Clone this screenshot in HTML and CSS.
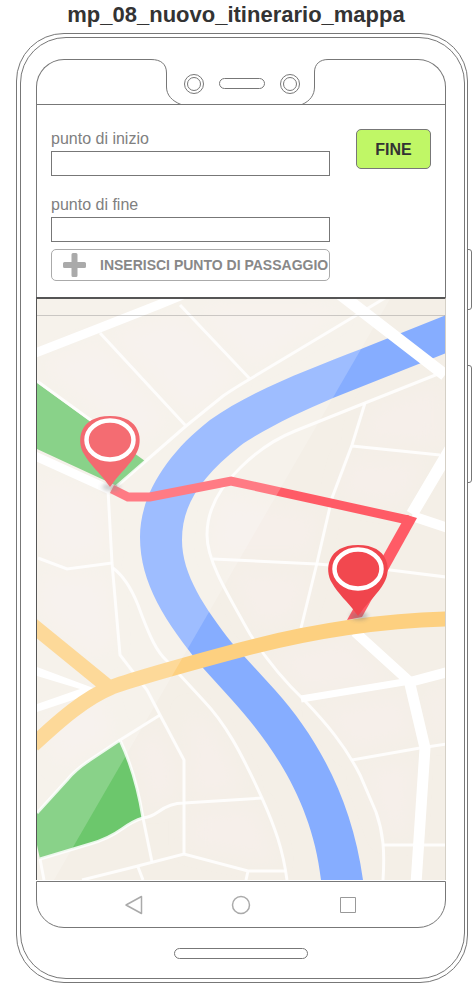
FILE: index.html
```html
<!DOCTYPE html>
<html lang="it">
<head>
<meta charset="utf-8">
<meta name="viewport" content="width=device-width, initial-scale=1">
<title>mp_08_nuovo_itinerario_mappa</title>
<link rel="stylesheet" href="styles.css">
</head>
<body>
<h1 class="title">mp_08_nuovo_itinerario_mappa</h1>
<div class="phone">
  <span class="side-key side-key-power"></span>
  <span class="side-key side-key-volume"></span>
  <div class="bezel">
    <div class="top">
      <div class="ear ear-left"></div>
      <svg class="notch" width="180" height="45" viewBox="151 59 180 45" aria-hidden="true">
        <path d="M151 59.500C161 59.500 166.500 64 166.500 73V87C166.500 95 172 101 181 104.500"/>
        <path d="M331 59.500H328C320 59.500 314.500 64 314.500 72V87C314.500 95 310 101 302 104.500"/>
        <circle cx="194" cy="84" r="9.500"/><circle cx="194" cy="84" r="6.500"/>
        <circle cx="290" cy="84" r="9.500"/><circle cx="290" cy="84" r="6.500"/>
        <rect x="219.500" y="78.500" width="45" height="10" rx="5"/>
      </svg>
      <div class="ear ear-right"></div>
    </div>
    <form class="route-form">
      <div class="fields">
        <label class="label" for="start">punto di inizio</label>
        <input class="field" id="start" type="text">
        <label class="label" for="end">punto di fine</label>
        <input class="field" id="end" type="text">
        <button class="add" type="button">
          <svg class="add-icon" width="24" height="24" viewBox="0 0 24 24" aria-hidden="true">
            <path d="M10 0h3a1.500 1.500 0 0 1 1.500 1.500V9H21.500a1.500 1.500 0 0 1 1.500 1.500v3a1.500 1.500 0 0 1-1.500 1.500H14.500v7.500a1.500 1.500 0 0 1-1.500 1.500h-3a1.500 1.500 0 0 1-1.500-1.500V15H1.500A1.500 1.500 0 0 1 0 13.500v-3A1.500 1.500 0 0 1 1.500 9H8.500V1.500A1.500 1.500 0 0 1 10 0z"/>
          </svg>
          <span>INSERISCI PUNTO DI PASSAGGIO</span>
        </button>
      </div>
      <button class="done" type="button">FINE</button>
    </form>
    <div class="map">
      <svg class="map-art" viewBox="37 299 408 581" role="img" aria-label="Mappa">
        <defs>
          <filter id="soft" x="-50%" y="-50%" width="200%" height="200%"><feGaussianBlur stdDeviation="2"/></filter>
          <filter id="haze" x="-50%" y="-50%" width="200%" height="200%"><feGaussianBlur stdDeviation="9"/></filter>
          <g id="pin">
            <ellipse cx="1" cy="47" rx="9" ry="4" fill="#777" opacity=".45" filter="url(#soft)"/>
            <path fill="#f0454d" d="M0 47L-3 43C-10 33-20 25-26 14C-34 1-31-24 0-24S34 1 26 14C20 25 10 33 3 43z"/>
            <ellipse rx="23.500" ry="19.500" fill="#f2484f" stroke="#fff" stroke-width="4.500"/>
          </g>
        </defs>
        <path fill="#f4efe7" d="M37 299h408v581H37z"/>
        <!-- City blocks -->
        <g fill="#f6efea" filter="url(#haze)">
          <path d="M115 335L180 315 235 375 190 412zM45 365L98 345 165 420 140 440zM200 310H340L255 362zM375 408L440 385V445L360 440zM350 460L425 462 400 505 340 495zM220 500L320 515 310 555H215zM230 570L310 575 295 620 255 625zM45 480L100 500 105 550 65 560 42 550zM45 575L105 580 110 645 95 655 42 610zM270 655L345 640 390 680 305 690zM320 710L405 695 412 735 355 750zM365 770L412 760 408 835H388zM190 812L255 808 275 862 190 845zM135 745L158 728 175 765V795L150 805zM190 710L215 735 245 790 192 795zM430 690H445V735H433zM45 720L100 700 110 735 60 765z"/>
        </g>
        <!-- River -->
        <path fill="#86adff" d="M446 315L361 349C310 369 250 391 210 420C165 455 140 497 140 537C140 583 165 622 203 668L232 700C270 742 312 800 321 880H363C352 800 318 738 275 690L232 643C205 608 182 575 182 540C182 505 200 478 240 446C262 430 300 412 333 398L446 353z"/>
        <!-- Parks -->
        <path fill="#6cc76c" d="M37 383L145 461L117 486L37 449zM120 740Q136 774 143 818Q133 821 122 829Q108 839 90 844L40 859L37 845V813L67 780Q75 770 90 760z"/>
        <g class="street">
          <path d="M37 381L92 421M117 486L186 426L223 396Q233 389 250 379L355 316L385 298M100 333L186 426M180 305L250 379"/>
          <path d="M443 372L365 403L295 431C270 441 254 454 240 468C220 487 207 509 207 535C207 560 225 590 250 634C264 656 282 679 305 701C325 722 345 745 360 775L376 812C383 832 385 850 383 880"/>
          <path d="M365 403L352 445L332 498L317 563L301 628M352 446L440 455"/>
          <path d="M213 559L317 564L390 570L446 577M38 558L67 569L112 563"/>
          <path d="M108 490L112 563L120 655L147 690L160 715L184 760V854"/>
          <path d="M113 568C125 577 132 590 138 605C150 638 157 652 167 661L203 700C225 723 240 750 262 798C275 827 283 850 287 880"/>
          <path d="M160 715L120 740Q136 774 143 818L152 862"/>
          <path d="M120 740L90 760Q75 770 67 780L37 813M40 859L90 844Q108 839 122 829Q133 821 143 818Q151 817 158 812Q170 803 184 803L262 798"/>
          <path d="M82 880L130 868L184 854L248 871H286M138 867L143 880M248 871L246 880M40 859L44 880M352 760L420 748L446 744M383 845H446"/>
        </g>
        <g class="road">
          <path stroke-width="9" d="M33 354L97 329L158 305L185 294M35 456L110 490"/>
          <path stroke-width="12" d="M340 294L445 375M451 448L412 514"/>
          <path stroke-width="10" d="M412 516L448 528M355 632L410 682M448 672L410 682"/>
          <path stroke-width="7" d="M301 699L410 681"/>
          <path stroke-width="11" d="M409 680L425 748L416 884"/>
        </g>
        <path fill="#fff" d="M37 667L96 689L82 697L37 712V704L80 689L37 676z"/>
        <!-- Highway -->
        <g fill="none" stroke="#fdd080" stroke-width="15">
          <path d="M448 619C370 621 300 634 240 650S140 677 112 687C85 698 60 720 33 745M31 624L112 690"/>
        </g>
        <!-- Itinerary -->
        <g fill="#ff5b66">
          <path fill="none" stroke="#ff5b66" stroke-width="9" d="M112 489L128 497H150L231 481L408 520"/>
          <path d="M407 515L417 518L362 617L347 620L402 522z"/>
        </g>
        <use href="#pin" x="358" y="569"/>
        <use href="#pin" x="110" y="440"/>
        <!-- Light sheen -->
        <path fill="#fff" opacity=".2" d="M37 299H390L54 880H37z"/>
        <path stroke="#777" stroke-opacity=".35" d="M37 315.500H445"/>
      </svg>
    </div>
    <nav class="nav">
      <button class="nav-key" type="button" aria-label="Indietro"><svg width="20" height="20" viewBox="0 0 20 20"><path d="M2 10L17.500 1.500V18.500z"/></svg></button>
      <button class="nav-key" type="button" aria-label="Home"><svg width="20" height="20" viewBox="0 0 20 20"><circle cx="10" cy="10" r="8.500"/></svg></button>
      <button class="nav-key" type="button" aria-label="Recenti"><svg width="20" height="20" viewBox="0 0 20 20"><path class="square" d="M2.500 2.500h15v15h-15z"/></svg></button>
    </nav>
    <div class="speaker"></div>
  </div>
</div>
</body>
</html>
```
FILE: styles.css
```css
* {
  box-sizing: border-box;
}

body {
  margin: 0;
  background: #fff;
  color: #333;
  font-family: "Liberation Sans", Arial, sans-serif;
}

.title {
  margin: 0;
  height: 33px;
  font-size: 22px;
  line-height: 30px;
  text-align: center;
}

.phone {
  position: relative;
  margin: 0 4px 0 16px;
  padding: 3px 2px 3px 3px;
  border: 1px solid #777;
  border-radius: 48px;
}

.side-key {
  position: absolute;
  left: 100%;
  width: 5px;
  border: 1px solid #777;
  border-radius: 0 3px 3px 0;
}

.side-key-power {
  top: 215px;
  height: 61px;
}

.side-key-volume {
  top: 331px;
  height: 118px;
}

.bezel {
  padding: 21px 18px 19px 15px;
  border: 1px solid #777;
  border-radius: 46px;
}

.top {
  display: flex;
}

.ear {
  flex: 1;
  border: 0 solid #777;
  border-top-width: 1px;
}

.ear-left {
  border-left-width: 1px;
  border-top-left-radius: 28px;
}

.ear-right {
  border-right-width: 1px;
  border-top-right-radius: 28px;
}

.notch {
  display: block;
  overflow: visible;
  fill: none;
  stroke: #777;
}

.route-form {
  display: flex;
  align-items: flex-start;
  gap: 26px;
  padding: 24px 14px 16px;
  border: 1px solid #777;
  border-bottom: 0;
}

.fields {
  flex: 1;
  display: flex;
  flex-direction: column;
  min-width: 0;
}

.label {
  margin-bottom: 2px;
  color: #808080;
  font-size: 16px;
  line-height: 20px;
}

.field {
  width: 100%;
  height: 25px;
  padding: 0 6px;
  border: 1px solid #777;
  border-radius: 0;
  background: #fff;
  font: inherit;
}

.field + .label {
  margin-top: 19px;
}

.add {
  display: flex;
  align-items: center;
  gap: 13px;
  height: 32px;
  margin-top: 7px;
  padding: 0 0 0 11px;
  border: 1px solid #aaa;
  border-radius: 5px;
  background: #fff;
  color: #888;
  font: bold 14px/20px "Liberation Sans", Arial, sans-serif;
  white-space: nowrap;
}

.add-icon {
  flex: none;
  fill: #aaa;
}

.done {
  width: 75px;
  height: 40px;
  padding: 2px 0 0;
  border: 1px solid #777;
  border-radius: 5px;
  background: #c0f766;
  color: #333;
  font: bold 16px/20px "Liberation Sans", Arial, sans-serif;
}

.map {
  margin-bottom: 1px;
  border: solid #555;
  border-width: 2px 1px 0;
  border-right-color: #d5d0c6;
}

.map-art {
  display: block;
  width: 100%;
}

.street,
.road {
  fill: none;
  stroke: #fff;
}

.street {
  stroke-width: 3;
  stroke-opacity: 0.85;
}

.nav {
  display: grid;
  grid-template-columns: repeat(3, 1fr);
  justify-items: center;
  align-items: center;
  height: 47px;
  padding: 0 44px;
  border: 1px solid #777;
  border-radius: 0 0 28px 28px;
}

.nav-key {
  padding: 0;
  border: 0;
  background: none;
}

.nav-key svg {
  display: block;
  fill: none;
  stroke: #aaa;
  stroke-width: 1.5;
  stroke-linejoin: round;
}

.nav-key .square {
  stroke: #999;
  stroke-width: 1;
}

.speaker {
  width: 134px;
  height: 11px;
  margin: 20px auto 0;
  border: 1px solid #777;
  border-radius: 6px;
}
```
